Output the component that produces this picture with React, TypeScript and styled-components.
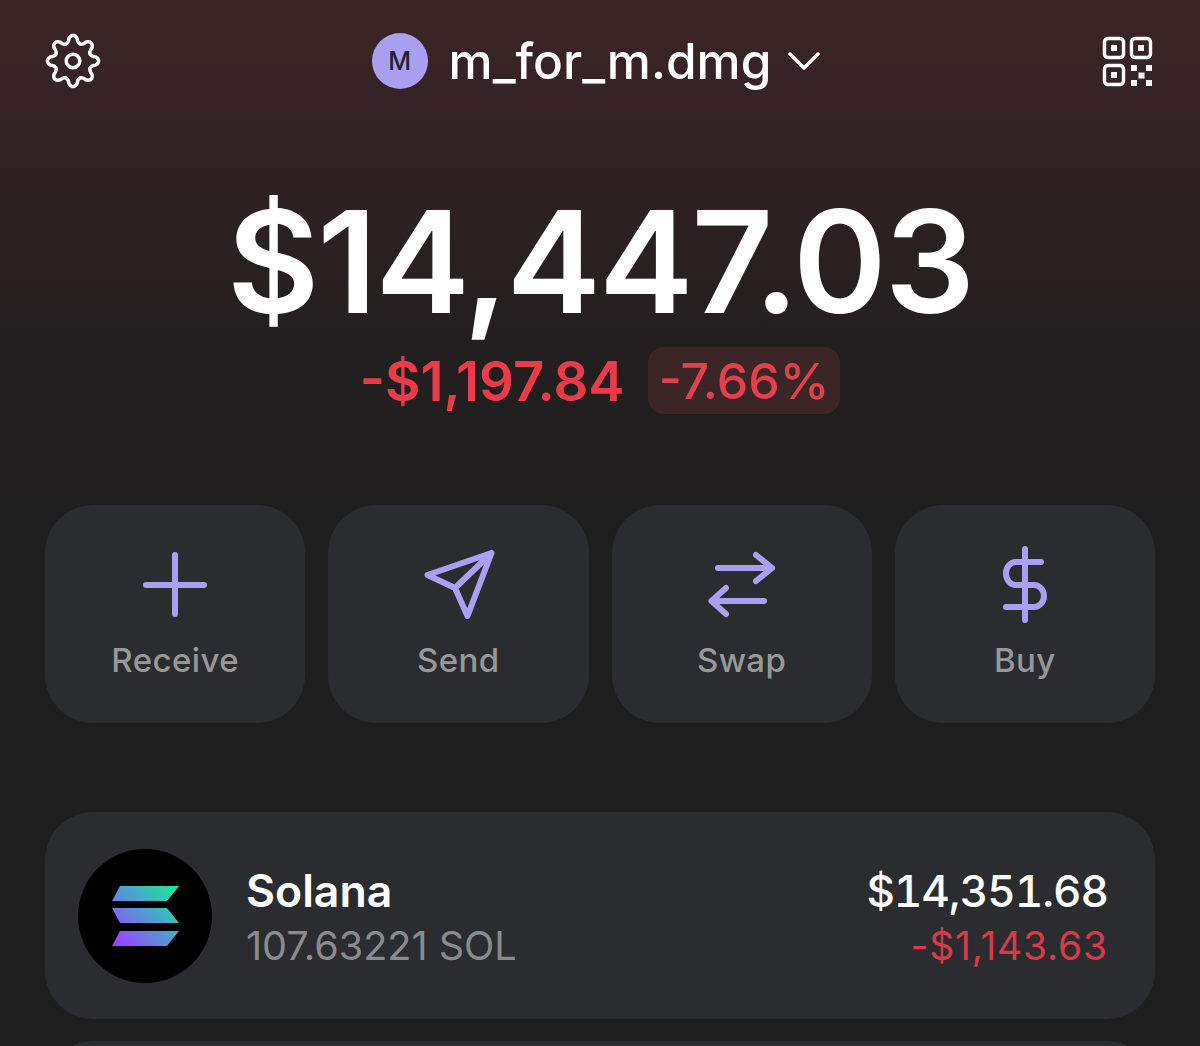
import React from 'react';
import styled, {createGlobalStyle} from 'styled-components';

const GlobalStyle = createGlobalStyle`
  html, body {
    margin: 0;
    padding: 0;
    background: #1e1e1f;
  }
  * {
    box-sizing: border-box;
  }
`;

interface Action {
  label: string;
  icon: React.ReactNode;
}

const actions: Action[] = [
  {
    label: 'Receive',
    icon: <path d="M11 40H69M40 10V69" />,
  },
  {
    label: 'Send',
    icon: <path d="M73.5 8L9.5 30L37 43L49.5 71ZM73.5 8L37 43" />,
  },
  {
    label: 'Swap',
    icon: <path d="M16 23H70M54 10L70 23L54 36M62 56H9.5M24 43L9.5 56L24 69" />,
  },
  {
    label: 'Buy',
    icon: (
      <path d="M40 4V75M56 17H31C25.5 17 21 22 21 28.5C21 35 25.5 40 31 40H49C54.5 40 59 45 59 51C59 57 54.5 62 49 62H21" />
    ),
  },
];

// wavy outline with 8 rounded teeth
function gearPath() {
  const points: string[] = [];
  for (let i = 0; i < 240; i++) {
    const angle = (i / 240) * Math.PI * 2;
    const wave = Math.cos(angle * 8);
    const radius = 22 + 3.6 * Math.sign(wave) * Math.pow(Math.abs(wave), 0.7);
    const x = 28 + radius * Math.sin(angle);
    const y = 28 - radius * Math.cos(angle);
    points.push(`${x.toFixed(2)} ${y.toFixed(2)}`);
  }
  return `M${points.join('L')}Z`;
}

function GearIcon() {
  return (
    <GearSvg viewBox="0 0 56 56">
      <path d={gearPath()} />
      <circle cx="28" cy="28" r="6.8" />
    </GearSvg>
  );
}

function QrIcon() {
  return (
    <QrSvg viewBox="0 0 51 51">
      <g fill="none" stroke="#fff" strokeWidth="3.4">
        <rect x="2.5" y="2.5" width="19" height="19" rx="3.5" />
        <rect x="29.5" y="2.5" width="19" height="19" rx="3.5" />
        <rect x="2.5" y="29.5" width="19" height="19" rx="3.5" />
      </g>
      <g fill="#fff">
        <rect x="9" y="9" width="6" height="6" />
        <rect x="36" y="9" width="6" height="6" />
        <rect x="9" y="36" width="6" height="6" />
        <rect x="29" y="29" width="6" height="6" />
        <rect x="44" y="29" width="6" height="6" />
        <rect x="36.5" y="36.5" width="6" height="6" />
        <rect x="29" y="44" width="6" height="6" />
        <rect x="44" y="44" width="6" height="6" />
      </g>
    </QrSvg>
  );
}

function SolanaLogo() {
  return (
    <LogoSvg viewBox="0 0 134 134">
      <defs>
        <linearGradient id="sol" gradientUnits="userSpaceOnUse" x1="36" y1="100" x2="100" y2="36">
          <stop offset="0.08" stopColor="#9945ff" />
          <stop offset="0.5" stopColor="#5497d5" />
          <stop offset="1" stopColor="#14f195" />
        </linearGradient>
      </defs>
      <circle cx="67" cy="67" r="67" fill="#000" />
      <g fill="url(#sol)">
        <path d="M42 37H101L89 52H34Z" />
        <path d="M34 59H89L101 74H42Z" />
        <path d="M42 82H101L89 97H34Z" />
      </g>
    </LogoSvg>
  );
}

function App() {
  return (
    <Page>
      <GlobalStyle />
      <Header>
        <GearIcon />
        <Account>
          <Avatar>M</Avatar>
          <AccountName>m_for_m.dmg</AccountName>
          <Chevron viewBox="0 0 34 20">
            <path d="M3 3L17 17L31 3" />
          </Chevron>
        </Account>
        <QrIcon />
      </Header>

      <Balance>$14,447.03</Balance>
      <Change>
        <ChangeAmount>-$1,197.84</ChangeAmount>
        <ChangeBadge>-7.66%</ChangeBadge>
      </Change>

      <Actions>
        {actions.map(action => (
          <ActionCard key={action.label}>
            <ActionIcon viewBox="0 0 80 80">{action.icon}</ActionIcon>
            <ActionLabel>{action.label}</ActionLabel>
          </ActionCard>
        ))}
      </Actions>

      <TokenList>
        <TokenCard>
          <SolanaLogo />
          <TokenInfo>
            <TokenName>Solana</TokenName>
            <TokenAmount>107.63221 SOL</TokenAmount>
          </TokenInfo>
          <TokenValues>
            <TokenValue>$14,351.68</TokenValue>
            <TokenChange>-$1,143.63</TokenChange>
          </TokenValues>
        </TokenCard>
        <TokenCard />
      </TokenList>
    </Page>
  );
}

export default App;

const Page = styled.div`
  width: 1200px;
  height: 1046px;
  overflow: hidden;
  padding: 33px 45px 0;
  font-family: Inter, "Liberation Sans", sans-serif;
  background: linear-gradient(180deg, #3c2426 0px, #2f2123 180px, #231f20 340px, #1f1e1f 520px, #1e1e1f 100%);
`;

const Header = styled.header`
  height: 56px;
  display: flex;
  align-items: center;
  justify-content: space-between;
`;

const GearSvg = styled.svg`
  width: 56px;
  height: 56px;
  fill: none;
  stroke: #fff;
  stroke-width: 3.5;
  stroke-linejoin: round;
`;

const Account = styled.div`
  display: flex;
  align-items: center;
  margin-left: -10px;
`;

const Avatar = styled.div`
  width: 56px;
  height: 56px;
  border-radius: 50%;
  background: #ab9ff2;
  color: #25222e;
  font-size: 25px;
  font-weight: 500;
  display: flex;
  align-items: center;
  justify-content: center;
`;

const AccountName = styled.div`
  margin-left: 21px;
  color: #fff;
  font-size: 49.6px;
  font-weight: 500;
`;

const Chevron = styled.svg`
  width: 34px;
  height: 20px;
  margin-left: 16px;
  fill: none;
  stroke: #fff;
  stroke-width: 3.5;
  stroke-linecap: round;
  stroke-linejoin: round;
`;

const QrSvg = styled.svg`
  width: 51px;
  height: 51px;
  margin-right: 2px;
`;

const Balance = styled.div`
  margin-top: 97px;
  text-align: center;
  color: #fff;
  font-size: 142px;
  font-weight: 600;
  line-height: 150px;
  letter-spacing: -2px;
`;

const Change = styled.div`
  margin-top: 11px;
  display: flex;
  align-items: center;
  justify-content: center;
  gap: 23px;
`;

const ChangeAmount = styled.div`
  color: #ec3b48;
  font-size: 54.5px;
  font-weight: 600;
`;

const ChangeBadge = styled.div`
  height: 67px;
  padding: 0 11px;
  border-radius: 16px;
  background: #3b2527;
  color: #e2404c;
  font-size: 50px;
  font-weight: 500;
  display: flex;
  align-items: center;
`;

const Actions = styled.div`
  margin-top: 91px;
  display: grid;
  grid-template-columns: repeat(4, 1fr);
  gap: 23px;
`;

const ActionCard = styled.div`
  height: 218px;
  border-radius: 48px;
  background: #2b2c30;
  display: flex;
  flex-direction: column;
  align-items: center;
  padding-top: 40px;
`;

const ActionIcon = styled.svg`
  width: 80px;
  height: 80px;
  fill: none;
  stroke: #ab9ff2;
  stroke-width: 6;
  stroke-linecap: round;
  stroke-linejoin: round;
`;

const ActionLabel = styled.div`
  margin-top: 15px;
  color: #98989a;
  font-size: 33px;
  font-weight: 500;
  letter-spacing: 0.4px;
`;

const TokenList = styled.div`
  margin-top: 89px;
  display: flex;
  flex-direction: column;
  gap: 22px;
`;

const TokenCard = styled.div`
  height: 207px;
  flex-shrink: 0;
  border-radius: 48px;
  background: #2b2c30;
  display: flex;
  align-items: center;
  padding: 0 47px 0 33px;
`;

const LogoSvg = styled.svg`
  width: 134px;
  height: 134px;
  flex-shrink: 0;
`;

const TokenInfo = styled.div`
  margin-left: 34px;
  padding-top: 6px;
  flex: 1;
`;

const TokenName = styled.div`
  color: #fff;
  font-size: 44.6px;
  font-weight: 600;
  line-height: 54px;
`;

const TokenAmount = styled.div`
  color: #8a8b8e;
  font-size: 39.6px;
  font-weight: 400;
  line-height: 56px;
`;

const TokenValues = styled.div`
  padding-top: 6px;
  text-align: right;
`;

const TokenValue = styled.div`
  color: #fff;
  font-size: 44px;
  font-weight: 500;
  line-height: 54px;
  font-variant-numeric: tabular-nums;
  letter-spacing: -1px;
`;

const TokenChange = styled.div`
  color: #d93a47;
  font-size: 39px;
  font-weight: 400;
  line-height: 56px;
  letter-spacing: 0.8px;
`;
